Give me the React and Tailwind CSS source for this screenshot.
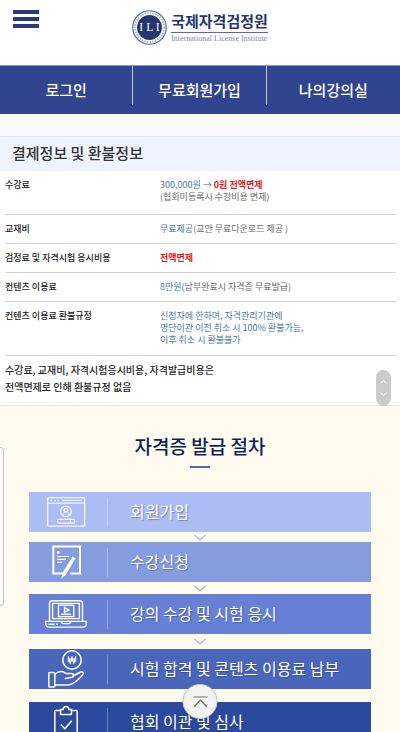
const SANS = "font-['Noto_Sans_CJK_KR','Noto_Sans',sans-serif]";

function BrowserIcon() {
  return (
    <svg className="h-10 w-11" viewBox="0 0 44 40" fill="none" stroke="white" strokeWidth="1.3" strokeOpacity="0.85" aria-hidden="true">
      <rect x="3.7" y="5.7" width="37" height="28.4" rx="1" />
      <path d="M3.7 11.2H40.7" />
      <path d="M6.5 8.4h1.8M10 8.4h1.8M13.5 8.4h1.8M18 8.4h20" strokeWidth="1" />
      <circle cx="22" cy="19.4" r="5.3" />
      <circle cx="22" cy="18" r="1.9" strokeWidth="1" />
      <path d="M18.800 23.200c.3-2 1.300-3.200 3.200-3.200s2.900 1.200 3.200 3.200" strokeWidth="1" />
      <rect x="13.7" y="27.3" width="17" height="3.8" rx="1" />
      <path d="M26.5 27.5v3.4" />
    </svg>
  );
}

function DocumentIcon() {
  return (
    <svg className="h-10 w-11" viewBox="0 0 44 40" fill="none" stroke="white" aria-hidden="true">
      <path strokeWidth="2" d="M18.500 31.500H9.300v-27H36v27h-10" />
      <circle cx="14.3" cy="10.4" r="1.4" fill="white" stroke="none" />
      <path strokeWidth="1.2" d="M13 14.500h12M13 17.400h9M13 20.400h5" />
      <path fill="white" stroke="none" d="M28.600 14.500l3 1.700L21.600 33l-4 3.500.4-5z" />
    </svg>
  );
}

function LaptopIcon() {
  return (
    <svg className="h-10 w-11" viewBox="0 0 44 40" fill="none" stroke="white" strokeWidth="1.4" aria-hidden="true">
      <path d="M5.5 27.3V9.2a2.4 2.4 0 0 1 2.4-2.4h28.2a2.4 2.4 0 0 1 2.4 2.4v18.1" />
      <path d="M8.6 24.6V9.4h26.8v15.2z" />
      <rect x="14.5" y="11.2" width="15.2" height="11.4" />
      <path d="M20.5 13.4v5l4.4-2.5z" />
      <path d="M17 20.2h10" />
      <path d="M1.7 27.4h40.6v2.4c0 2-1.4 3.3-3.2 3.3H4.9c-1.8 0-3.2-1.3-3.2-3.3z" />
      <path d="M17.5 27.6c0 1.4.6 2 1.6 2h5.8c1 0 1.6-.6 1.6-2" />
      <path d="M4.5 30.2h6M12 30.2h2" />
    </svg>
  );
}

function HandCoinIcon() {
  return (
    <svg className="h-10 w-11" viewBox="0 0 44 40" fill="none" stroke="white" strokeWidth="1.5" strokeLinecap="round" strokeLinejoin="round" aria-hidden="true">
      <circle cx="28" cy="11" r="9.2" />
      <path d="M24.4 7.6l1.8 7 1.8-7 1.8 7 1.8-7M23.8 10h8.4M23.8 12h8.4" strokeWidth="1.1" />
      <rect x="4.8" y="23.4" width="6" height="14.6" rx="1" />
      <path d="M11 25.2c3-2.8 7-3.2 10-1.4l1.2.6h5.2c2.6 0 3 3.2.6 3.8l-6.6 1.2" />
      <path d="M29.2 27l7.2-4c2-1 3.8.8 2.4 2.6-3 3.8-7 7.4-11.4 9.6-1.8.9-3 .9-5 .8H11" />
    </svg>
  );
}

function ClipboardIcon() {
  return (
    <svg className="h-10 w-11" viewBox="0 0 44 40" fill="none" stroke="white" strokeWidth="1.5" strokeLinejoin="round" aria-hidden="true">
      <path d="M16.6 8.6h-4.800a1 1 0 0 0-1 1V37h22.400V9.600a1 1 0 0 0-1-1h-4.800" />
      <path d="M16.6 12.400V7.600h2.600c0-2 1.200-3 2.800-3s2.800 1 2.800 3h2.600v4.800z" />
      <path d="M16.8 22.600l4 4.200 7-8" />
    </svg>
  );
}

function Seal() {
  return (
    <svg className="size-[35px]" viewBox="0 0 36 36" aria-hidden="true">
      <circle cx="18" cy="18" r="17.2" fill="white" stroke="#5a669c" strokeWidth="1.2" />
      <circle cx="18" cy="18" r="14.900" fill="none" stroke="#a3abc9" strokeWidth="1.800" strokeDasharray="1.500 1.200" />
      <circle cx="18" cy="18" r="12.8" fill="#26366f" />
      <text x="18" y="22" textAnchor="middle" fill="white" fontSize="12" fontFamily="Liberation Serif, serif">I L I</text>
    </svg>
  );
}

const fees = [
  {
    label: "수강료",
    value: (
      <>
        300,000원 → <b className="font-bold text-[#e01818]">0원 전액면제</b>
        <br />
        <span className="text-[#6b6b6b]">(협회미등록시 수강비용 면제)</span>
      </>
    ),
    pad: "pb-[11px]",
  },
  {
    label: "교재비",
    value: (
      <>
        무료제공<span className="text-[#6b6b6b]">(교안 무료다운로드 제공 )</span>
      </>
    ),
    pad: "pb-2",
  },
  {
    label: "검정료 및 자격시험 응시비용",
    value: <b className="font-bold text-[#e01818]">전액면제</b>,
    pad: "pb-2",
  },
  {
    label: "컨텐츠 이용료",
    value: (
      <>
        8만원<span className="text-[#6b6b6b]">(납부완료시 자격증 무료발급)</span>
      </>
    ),
    pad: "pb-2",
  },
  {
    label: "컨텐츠 이용료 환불규정",
    value: (
      <>
        신청자에 한하며, 자격관리기관에
        <br />
        명단이관 이전 취소 시 100% 환불가능,
        <br />
        이후 취소 시 환불불가
      </>
    ),
    pad: "pb-[9px]",
  },
];

const steps = [
  { label: "회원가입", color: "bg-[#abbdf2]", gap: "h-[10px]", Icon: BrowserIcon },
  { label: "수강신청", color: "bg-[#859de0]", gap: "h-3", Icon: DocumentIcon },
  { label: "강의 수강 및 시험 응시", color: "bg-[#6580d4]", gap: "h-[15px]", Icon: LaptopIcon },
  { label: "시험 합격 및 콘텐츠 이용료 납부", color: "bg-[#4a66ba]", gap: "h-[13px]", Icon: HandCoinIcon },
  { label: "협회 이관 및 심사", color: "bg-[#2b4a9e]", gap: null, Icon: ClipboardIcon },
];

export default function App() {
  return (
    <div className={`relative flex h-screen flex-col overflow-hidden bg-[#fffbee] text-[#222] ${SANS}`}>
      <header className="relative flex h-[65px] shrink-0 justify-center bg-white pt-[9px]">
        <button type="button" aria-label="메뉴" className="absolute top-[10px] left-[13px] flex w-[26px] flex-col gap-[3px]">
          <span className="h-1 bg-[#2a3a7c]" />
          <span className="h-1 bg-[#2a3a7c]" />
          <span className="h-1 bg-[#2a3a7c]" />
        </button>
        <a href="#home" className="flex h-9 items-center gap-1 text-[#26366f]">
          <Seal />
          <span className="flex flex-col">
            <span className="text-[15px] leading-[22px] font-bold">국제자격검정원</span>
            <span className="h-px bg-[#5a669c]" />
            <span className="font-['Liberation_Serif',serif] text-[8px] leading-[12px] whitespace-nowrap text-[#8289a8]">
              International License Institute
            </span>
          </span>
        </a>
      </header>

      <nav className="grid h-[49px] shrink-0 grid-cols-3 border-t border-[#8d98c4] bg-[#31448f] text-[15px] font-medium text-white">
        <a href="#login" className="flex h-[39px] items-end justify-center border-r border-white/70 pb-1">로그인</a>
        <a href="#join" className="flex h-[39px] items-end justify-center border-r border-white/70 pb-1">무료회원가입</a>
        <a href="#room" className="flex h-[39px] items-end justify-center pb-1">나의강의실</a>
      </nav>

      <main className="shrink-0">
        <section className="border-b border-[#e9e9ea] bg-white">
          <div className="h-[22px] bg-[#fafafa]" />
          <h2 className="flex h-[35px] items-center border-t border-[#e2e7ee] bg-[#eff3fe] pb-0.5 pl-3 text-[15px] font-medium text-[#333]">
            결제정보 및 환불정보
          </h2>
          <div className="pr-1 pl-[5px]">
            <table className="w-full text-left text-[9px] leading-[12px]">
              <tbody>
                {fees.map((f) => (
                  <tr key={f.label} className="border-b border-[#d2d2d2]">
                    <th scope="row" className={`w-[155px] pt-2 align-top font-medium ${f.pad}`}>{f.label}</th>
                    <td className={`pt-2 align-top text-[#3f7ca4] ${f.pad}`}>{f.value}</td>
                  </tr>
                ))}
              </tbody>
            </table>
            <p className="pt-[5px] pb-[10px] text-[10px] leading-[17px] font-medium">
              수강료, 교재비, 자격시험응시비용, 자격발급비용은
              <br />
              전액면제로 인해 환불규정 없음
            </p>
          </div>
        </section>

        <section className="flex flex-col items-center px-[29px] pt-[26px]">
          <h2 className="text-[19px] leading-[28px] font-medium text-[#101f57]">자격증 발급 절차</h2>
          <div className="mt-[6px] mb-6 h-[2px] w-5 bg-[#5a6aa5]" />
          <ol className="w-full">
            {steps.map(({ label, color, gap, Icon }) => (
              <li key={label}>
                <div className={`flex h-10 items-center ${color}`}>
                  <span className="flex w-[78px] justify-center pr-1">
                    <Icon />
                  </span>
                  <span className="h-[29px] w-px bg-white/30" />
                  <span className="pb-[3px] pl-[22px] text-[16px] leading-6 text-white [text-shadow:1px_1px_1px_rgb(40_50_90/0.4)]">
                    {label}
                  </span>
                </div>
                {gap && (
                  <div className={`flex items-center justify-center ${gap}`}>
                    <svg className="h-[7px] w-3" viewBox="0 0 12 7" fill="none" stroke="#a3add0" strokeWidth="1.1" aria-hidden="true">
                      <path d="M.5.8L6 6 11.500.8" />
                    </svg>
                  </div>
                )}
              </li>
            ))}
          </ol>
        </section>
      </main>

      <aside aria-label="측면 패널" className="absolute top-[447px] left-0 h-[159px] w-1 rounded-r-lg border border-l-0 border-[#c2c4c8] bg-white" />

      <div className="absolute top-[370px] right-[9px] flex h-9 w-[15px] flex-col items-center justify-center gap-2 rounded-full bg-[#cbcbcb]">
        <svg className="h-1 w-[7px]" viewBox="0 0 7 4" fill="none" stroke="white" strokeWidth="1" aria-hidden="true">
          <path d="M.5 3.5l3-3 3 3" />
        </svg>
        <svg className="h-1 w-[7px]" viewBox="0 0 7 4" fill="none" stroke="white" strokeWidth="1" aria-hidden="true">
          <path d="M.5.5l3 3 3-3" />
        </svg>
      </div>

      <button
        type="button"
        aria-label="맨 위로"
        className="absolute bottom-[13px] left-1/2 flex size-[35px] -translate-x-1/2 items-center justify-center rounded-full border border-[#c9c9c4] bg-[#f3f3f1] shadow-sm"
      >
        <svg className="h-3 w-4" viewBox="0 0 16 12" fill="none" stroke="#777" strokeWidth="1.4" aria-hidden="true">
          <path d="M1 1h14" stroke="#999" />
          <path d="M1.500 11L8 4l6.500 7" />
        </svg>
      </button>
    </div>
  );
}
